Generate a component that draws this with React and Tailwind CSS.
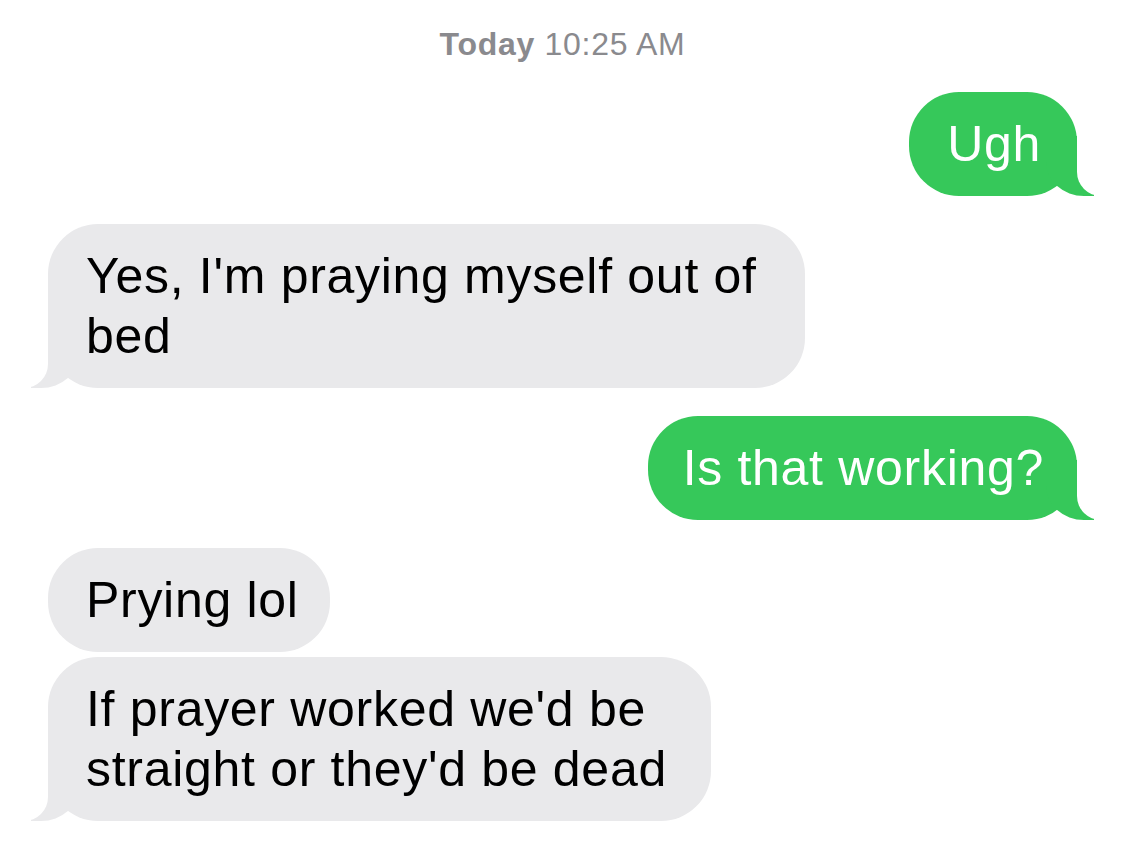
import clsx from "clsx";

function Bubble({ sent = false, tail = false, className, children }) {
  return (
    <div
      className={clsx(
        "relative w-fit rounded-[50px] py-[22px] pl-[38px] text-[50px] leading-[60px] tracking-[0.7px]",
        sent ? "self-end bg-[#36c85a] text-white" : "self-start bg-[#e9e9eb] text-black",
        className
      )}
    >
      <span className="relative z-10">{children}</span>

      {/* tail */}
      {tail && sent && (
        <>
          <span className="absolute bottom-0 right-[-17px] h-[60px] w-[48px] rounded-bl-[38px_34px] bg-[#36c85a]" />
          <span className="absolute bottom-0 right-[-62px] h-[60px] w-[62px] rounded-bl-[24px] bg-white" />
        </>
      )}
      {tail && !sent && (
        <>
          <span className="absolute bottom-0 left-[-17px] h-[60px] w-[48px] rounded-br-[38px_34px] bg-[#e9e9eb]" />
          <span className="absolute bottom-0 left-[-62px] h-[60px] w-[62px] rounded-br-[24px] bg-white" />
        </>
      )}
    </div>
  );
}

export default function App() {
  return (
    <div className="flex min-h-screen flex-col overflow-hidden bg-white pl-[48px] pr-[47px] pt-[26px] font-['Liberation_Sans',Arial,sans-serif]">
      {/* timestamp */}
      <div className="text-center text-[32px] leading-[36px] tracking-[0.7px] text-[#8a8a8e]">
        <span className="font-semibold">Today</span> 10:25 AM
      </div>

      <Bubble sent tail className="mt-[30px] pr-[36px]">Ugh</Bubble>

      <Bubble tail className="mt-[28px] pr-[48px]">
        Yes, I'm praying myself out of
        <br />
        bed
      </Bubble>

      <Bubble sent tail className="mt-[28px] pr-[33px] !pl-[35px]">Is that working?</Bubble>

      <Bubble className="mt-[28px] pr-[31px]">Prying lol</Bubble>

      <Bubble tail className="mt-[5px] pr-[44px]">
        If prayer worked we'd be
        <br />
        straight or they'd be dead
      </Bubble>
    </div>
  );
}
